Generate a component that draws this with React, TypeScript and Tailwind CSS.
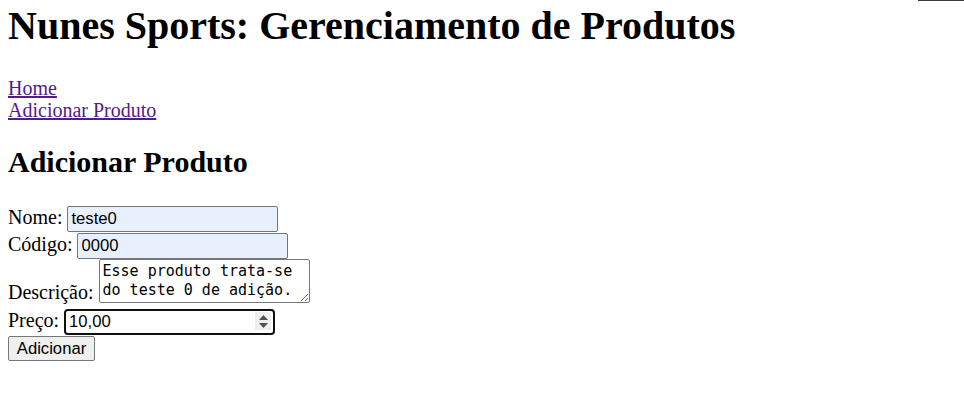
import React from "react";

const inputBase =
  "box-border w-[211px] h-[26px] border border-[#767676] rounded-[2px] px-[3px] text-[16.67px] leading-[19px] text-black font-['Liberation_Sans',Arial,sans-serif] outline-none";

export default function App() {
  return (
    <div className="relative min-h-[406px] bg-white text-black px-[8px] pt-[3px] font-['Liberation_Serif','Times_New_Roman',serif]">
      <div className="absolute right-0 top-0 h-px w-[46px] bg-[#3c3c3c]" />
      <h1 className="text-[40px] leading-[45px] font-bold">
        Nunes Sports: Gerenciamento de Produtos
      </h1>
      <nav className="mt-[29px] flex flex-col items-start text-[20px] leading-[22px]">
        <a href="#" className="text-[#551a8b] underline">
          Home
        </a>
        <a href="#" className="text-[#551a8b] underline">
          Adicionar Produto
        </a>
      </nav>
      <h2 className="mt-[24px] text-[30px] leading-[34px] font-bold">
        Adicionar Produto
      </h2>
      <form
        className="mt-[27px] flex flex-col items-start text-[20px] leading-[22px]"
        onSubmit={(e) => e.preventDefault()}
      >
        <div className="flex items-baseline gap-[5px]">
          <label>Nome:</label>
          <input
            type="text"
            defaultValue="teste0"
            className={`${inputBase} bg-[#e8f0fe]`}
          />
        </div>
        <div className="mt-[1px] flex items-baseline gap-[5px]">
          <label>Código:</label>
          <input
            type="text"
            defaultValue="0000"
            className={`${inputBase} bg-[#e8f0fe]`}
          />
        </div>
        <div className="flex items-end gap-[5px]">
          <label>Descrição:</label>
          <textarea
            defaultValue="Esse produto trata-se do teste 0 de adição."
            className="box-border block w-[211px] h-[44px] border border-[#767676] rounded-[2px] bg-white px-[3px] py-[2px] text-[15px] leading-[18.5px] text-black font-['DejaVu_Sans_Mono',monospace] overflow-hidden outline-none"
          />
        </div>
        <div className="mt-[6px] flex items-baseline gap-[5px]">
          <label>Preço:</label>
          <div className="relative">
            <input
              type="text"
              defaultValue="10,00"
              className="box-border w-[211px] h-[26px] border-2 border-[#101010] rounded-[4px] bg-white pl-[3px] pr-[22px] text-[16.67px] leading-[19px] text-black font-['Liberation_Sans',Arial,sans-serif] outline-none"
            />
            <div className="absolute right-[4px] top-[3px] flex h-[18px] w-[16px] flex-col items-center justify-center gap-[3px] bg-[#efefef]">
              <svg width="9" height="5" viewBox="0 0 9 5">
                <path d="M0 5 L4.5 0 L9 5 Z" fill="#505050" />
              </svg>
              <svg width="9" height="5" viewBox="0 0 9 5">
                <path d="M0 0 L4.5 5 L9 0 Z" fill="#505050" />
              </svg>
            </div>
          </div>
        </div>
        <button
          type="submit"
          className="mt-[1px] box-border h-[25px] w-[87px] border border-[#767676] rounded-[2px] bg-[#efefef] text-[16.67px] leading-[19px] text-black font-['Liberation_Sans',Arial,sans-serif]"
        >
          Adicionar
        </button>
      </form>
    </div>
  );
}
